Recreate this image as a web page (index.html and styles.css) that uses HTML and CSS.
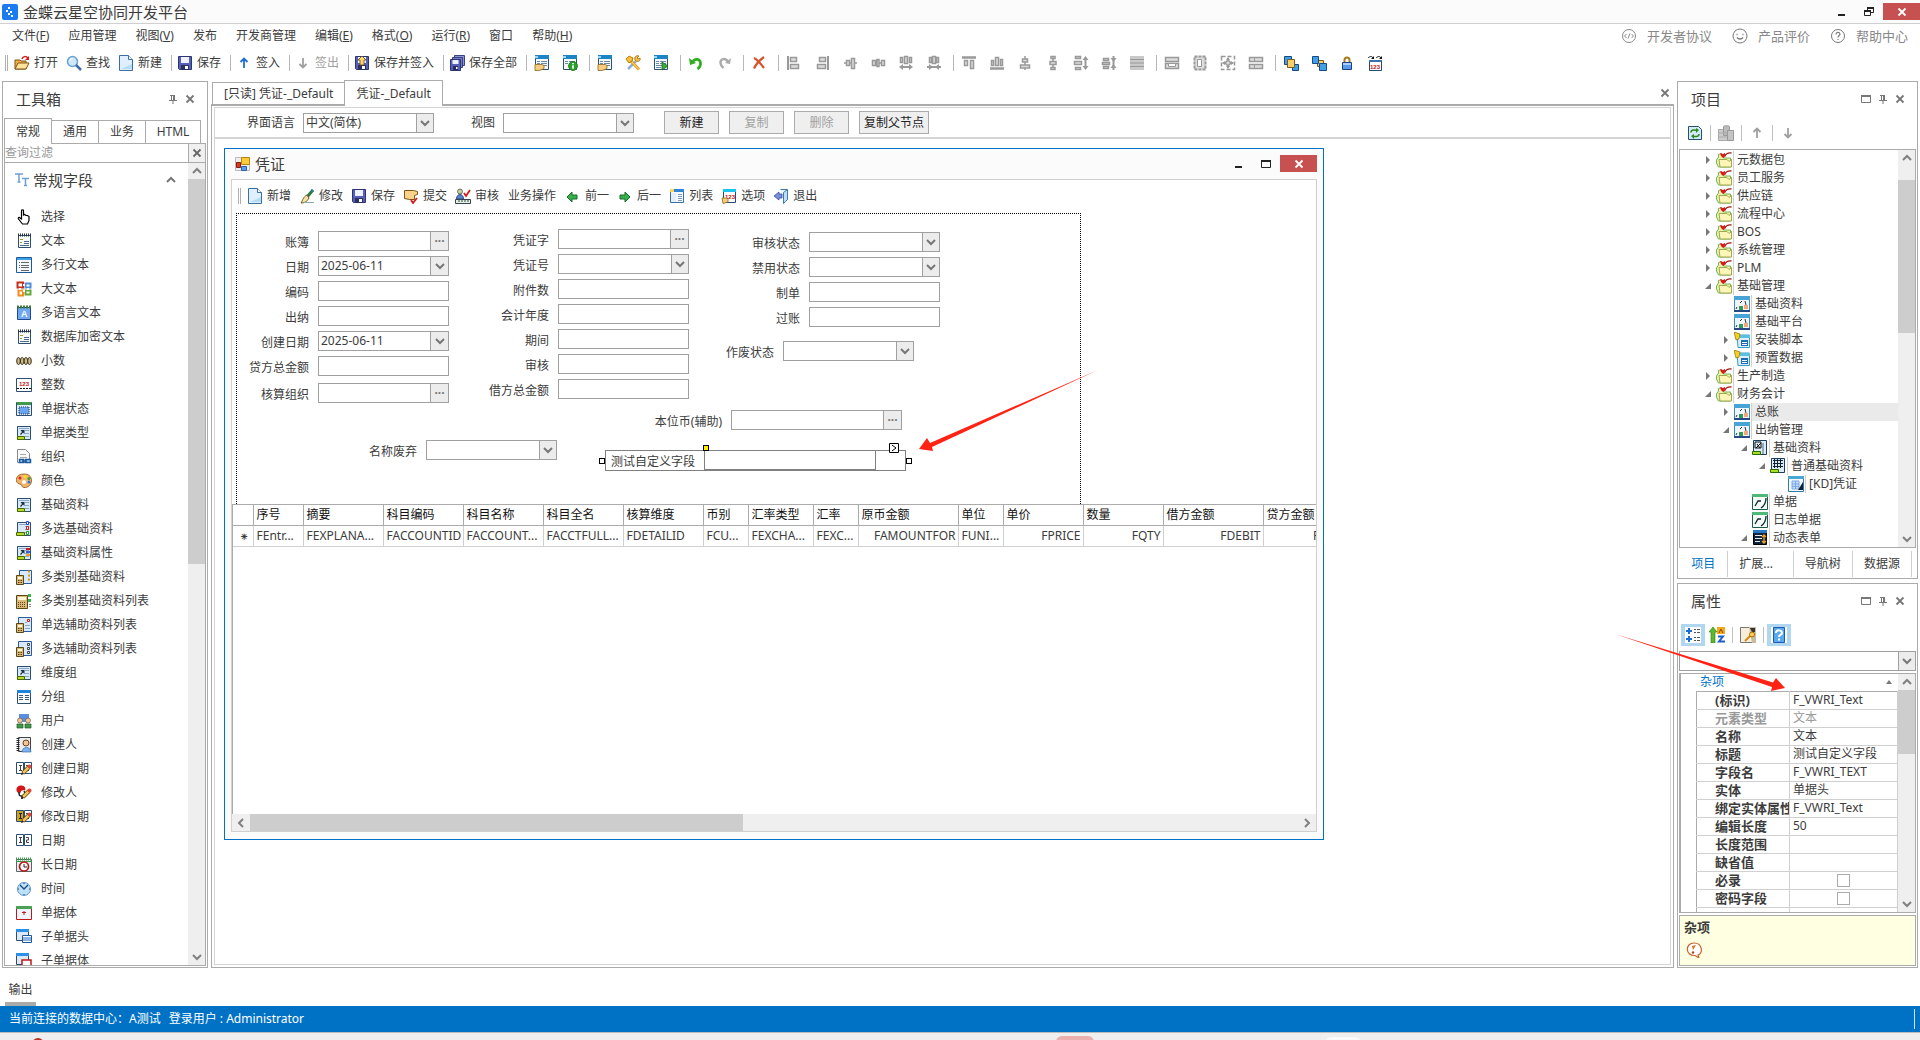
FILE: index.html
```html
<!DOCTYPE html>
<html lang="zh-CN">
<head>
    <meta charset="UTF-8">
    <meta name="viewport" content="width=device-width, initial-scale=1.0">
    <title>金蝶云星空协同开发平台</title>
    <link rel="stylesheet" href="styles.css">
</head>
<body>
    <!-- icon sprite -->
    <svg class="sprite" aria-hidden="true">
        <symbol id="i-logo" viewBox="0 0 16 16"><rect width="16" height="16" rx="2" fill="#1b7bf0"/><path d="M6 3h2v2H6zM4 6h2v2H4zM8 7h2v2H8zM6 9h2v2H6zM9 11h2v2H9z" fill="#fff"/></symbol>
        <symbol id="i-close" viewBox="0 0 16 16"><path d="M4.500 4.500l7 7M11.500 4.500l-7 7" stroke="currentColor" stroke-width="1.800" fill="none"/></symbol>
        <symbol id="i-min" viewBox="0 0 16 16"><path d="M5 10h7v2H5z" fill="currentColor"/></symbol>
        <symbol id="i-max" viewBox="0 0 16 16"><path d="M3.500 4.500h9v7h-9z" stroke="currentColor" fill="none"/><path d="M3 4h10v2H3z" fill="currentColor"/></symbol>
        <symbol id="i-restore" viewBox="0 0 16 16"><path d="M6.500 6V3.500h6v5H10M3.500 7.500h6v4h-6z" stroke="currentColor" fill="none"/><path d="M6 3h7v2H6zM3 6h7v2H3z" fill="currentColor"/></symbol>
        <symbol id="i-pin" viewBox="0 0 16 16"><path d="M6.500 4v5M5 4.500h5M4 9.500h8M8 9v4" stroke="currentColor" fill="none"/><path d="M8 4h2v6H8z" fill="currentColor"/></symbol>
        <symbol id="i-chev-up" viewBox="0 0 16 16"><path d="M4 10l4-4 4 4" stroke="currentColor" stroke-width="2" fill="none"/></symbol>
        <symbol id="i-chev-down" viewBox="0 0 16 16"><path d="M4 6l4 4 4-4" stroke="currentColor" stroke-width="2" fill="none"/></symbol>
        <symbol id="i-chev-left" viewBox="0 0 16 16"><path d="M10 4L6 8l4 4" stroke="currentColor" stroke-width="2" fill="none"/></symbol>
        <symbol id="i-chev-right" viewBox="0 0 16 16"><path d="M6 4l4 4-4 4" stroke="currentColor" stroke-width="2" fill="none"/></symbol>
        <symbol id="i-code" viewBox="0 0 16 16"><circle cx="8" cy="8" r="6.500" fill="none" stroke="#888"/><path d="M5.500 6l-2 2 2 2M10.500 6l2 2-2 2M9 5.500l-2 5" fill="none" stroke="#888"/></symbol>
        <symbol id="i-smile" viewBox="0 0 16 16"><circle cx="8" cy="8" r="7" fill="none" stroke="#777"/><path d="M4.500 6.500h1M10.500 6.500h1M5 9.500c1.500 2 4.500 2 6 0" fill="none" stroke="#777" stroke-width="1.300"/></symbol>
        <symbol id="i-help" viewBox="0 0 16 16"><circle cx="8" cy="8" r="6.500" fill="none" stroke="#777"/><path d="M6 6.500c0-3 4-2.500 4-.3C10 7.500 8 7.500 8 9.500M8 11v1" fill="none" stroke="#777" stroke-width="1.200"/></symbol>

        <symbol id="i-open" viewBox="0 0 16 16"><path d="M1 5h5l1 1h5v8H1z" fill="#f0b04a" stroke="#7c5416"/><path d="M1 14l3-6h11l-3 6z" fill="#ffe39a" stroke="#7c5416"/><path d="M8 4c1-3 4-3 6-1" stroke="#d61c1c" stroke-width="1.500" fill="none"/><path d="M15 1v4h-4z" fill="#d61c1c"/></symbol>
        <symbol id="i-search" viewBox="0 0 16 16"><circle cx="6.500" cy="6.500" r="5" fill="#cfe8fb" stroke="#6aa2d6" stroke-width="1.500"/><path d="M10 10l5 5" stroke="#3e6ea8" stroke-width="2.500"/><path d="M4 6c0-1.500 1-2.500 2.500-2.500" stroke="#fff" fill="none"/></symbol>
        <symbol id="i-new" viewBox="0 0 16 16"><path d="M1.500.5h9l4 4v11h-13z" fill="#dff0fc" stroke="#3a6ea5"/><path d="M10.500.5v4h4" fill="#fff" stroke="#3a6ea5"/><path d="M3 14h11V9z" fill="#b4dbf7"/></symbol>
        <symbol id="i-save" viewBox="0 0 16 16"><path d="M1.500 1.500h13v13h-12l-1-1z" fill="#5561b8" stroke="#2d3570"/><path d="M4 2h8v6H4z" fill="#eef2ff"/><path d="M4 10h8v5H4z" fill="#2b3060"/><path d="M8 11h3v3H8z" fill="#fff"/></symbol>
        <symbol id="i-up" viewBox="0 0 16 16"><path d="M8 13V4M4.500 7L8 3.500 11.500 7" stroke="currentColor" stroke-width="1.800" fill="none"/></symbol>
        <symbol id="i-down" viewBox="0 0 16 16"><path d="M8 3v9M4.500 9L8 12.500 11.500 9" stroke="currentColor" stroke-width="1.800" fill="none"/></symbol>
        <symbol id="i-saveup" viewBox="0 0 16 16"><use href="#i-save"/><path d="M8 1l4 4h-2v5H6V5H4z" fill="#ffd76b" stroke="#6b4a12" stroke-width=".8"/></symbol>
        <symbol id="i-saveall" viewBox="0 0 16 16"><path d="M5.500.5h10v10h-10z" fill="#8b95d8" stroke="#39427f"/><path d="M3.500 2.500h10v10h-10z" fill="#7480cc" stroke="#39427f"/><path d="M1.500 4.500h10v11h-10z" fill="#5561b8" stroke="#2d3570"/><path d="M3.500 5h6v4h-6z" fill="#eef2ff"/><path d="M4 11h5v4H4z" fill="#252b58"/><path d="M7 12h1.500v2H7z" fill="#fff"/></symbol>
        <symbol id="i-form" viewBox="0 0 16 16"><path d="M1.500.5h13v14h-13z" fill="#f4f8fc" stroke="#2c4f70"/><path d="M1 0h14v4H1z" fill="#1d84c5"/><path d="M1 1h3v2H1z" fill="#9fd4f4"/><path d="M3 6.500h3M7 6.500h6M7 8.500h6M3 8.500h3M7 10.500h6" stroke="#6d8aa3"/></symbol>
        <symbol id="i-formhand" viewBox="0 0 16 16"><use href="#i-form"/><path d="M1 9.500h7l2 1v3l-2 1-3 1H1z" fill="#f6ce7e" stroke="#8a6420" stroke-width=".8"/></symbol>
        <symbol id="i-forminfo" viewBox="0 0 16 16"><use href="#i-form"/><circle cx="11" cy="11" r="4.500" fill="#2ca02c" stroke="#166b16" stroke-width=".7"/><path d="M11 8v1.300M11 10.300v3.500" stroke="#fff" stroke-width="1.600"/></symbol>
        <symbol id="i-tools" viewBox="0 0 16 16"><path d="M3 14l8-8" stroke="#8fb0da" stroke-width="2.500"/><path d="M6 6l8 8.500" stroke="#d88a10" stroke-width="2.800"/><path d="M6 6l8 8.500" stroke="#ffd060" stroke-width="1.200"/><path d="M1 4l3-3 4 2-1 3-3 2z" fill="#ffbf2e" stroke="#9a6a00" stroke-width=".8"/><path d="M10 5c-1-3 1-5 4-4l-2 2 1 1 2-1c1 3-2 4-4 3z" fill="#f3c34c" stroke="#9a6a00" stroke-width=".8"/></symbol>
        <symbol id="i-formgo" viewBox="0 0 16 16"><use href="#i-form"/><path d="M3 10.500h5M3 12.500h5" stroke="#6d8aa3"/><path d="M9 7l6 4-6 4z" fill="#3cab3c" stroke="#176b17" stroke-width=".8"/></symbol>
        <symbol id="i-undo" viewBox="0 0 16 16"><path d="M4 8c2-5 9-5 8.500 1-.2 2.500-1.500 4-3 5" stroke="#2fae22" stroke-width="2.800" fill="none"/><path d="M1 3l1 7 6-2z" fill="#2fae22"/></symbol>
        <symbol id="i-redo" viewBox="0 0 16 16"><path d="M12 7c-2-4-8-4-7.500 1 .2 2.500 1.500 4 3 5" stroke="#aaa" stroke-width="2.500" fill="none"/><path d="M15 3l-1 6-5-1z" fill="#aaa"/></symbol>
        <symbol id="i-del" viewBox="0 0 16 16"><path d="M3 3c4 2 7 6 10 10M13 2C9 5 5 9 3 13.500" stroke="#d9532c" stroke-width="2.200" fill="none"/></symbol>

        <symbol id="i-al" viewBox="0 0 16 16"><path d="M2 1v14" stroke="#999" stroke-width="2"/><path d="M4.500 2.500h6v4h-6zM4.500 9.500h8v4h-8z" fill="#ddd" stroke="#999" stroke-width="1.500"/></symbol>
        <symbol id="i-ar" viewBox="0 0 16 16"><path d="M14 1v14" stroke="#999" stroke-width="2"/><path d="M5.500 2.500h6v4h-6zM3.500 9.500h8v4h-8z" fill="#ddd" stroke="#999" stroke-width="1.500"/></symbol>
        <symbol id="i-ac" viewBox="0 0 16 16"><path d="M2 8h13" stroke="#999" stroke-width="1.500"/><path d="M4.500 5.500h3v5h-3zM9.500 3.500h3v10h-3z" fill="#ddd" stroke="#999" stroke-width="1.500"/></symbol>
        <symbol id="i-am" viewBox="0 0 16 16"><path d="M2 8h12" stroke="#999" stroke-width="1.500"/><path d="M2.500 5.500h3v5h-3zM7 4.500h2v7H7zM11.500 5.500h3v5h-3z" fill="#ddd" stroke="#999" stroke-width="1.500"/></symbol>
        <symbol id="i-hs" viewBox="0 0 16 16"><path d="M2.500 2.500h2v5h-2zM6.500 1.500h3v7h-3zM11.500 2.500h2v5h-2z" fill="#ddd" stroke="#999" stroke-width="1.500"/><path d="M3 12h10" stroke="#999" stroke-width="2"/><path d="M5 9v6l-4-3zM11 9v6l4-3z" fill="#999"/></symbol>
        <symbol id="i-hd" viewBox="0 0 16 16"><path d="M3.500 2.500h2v5h-2zM6.500 1.500h3v7h-3zM10.500 2.500h2v5h-2z" fill="#ddd" stroke="#999" stroke-width="1.500"/><path d="M1 12h14" stroke="#999" stroke-width="2"/><path d="M3 9v6l4-3zM13 9v6l-4-3z" fill="#999"/></symbol>
        <symbol id="i-at" viewBox="0 0 16 16"><path d="M1 2.500h14" stroke="#999" stroke-width="2.500"/><path d="M3.500 5.500h3v5h-3zM9.500 5.500h3v8h-3z" fill="#ddd" stroke="#999" stroke-width="1.500"/></symbol>
        <symbol id="i-ab" viewBox="0 0 16 16"><path d="M1 13.500h14" stroke="#999" stroke-width="2.500"/><path d="M2.500 5.500h2v5h-2zM6.500 2.500h3v8h-3zM11.500 4.500h2v6h-2z" fill="#ddd" stroke="#999" stroke-width="1.500"/></symbol>
        <symbol id="i-vc" viewBox="0 0 16 16"><path d="M8 1v14" stroke="#999" stroke-width="1.500"/><path d="M5.500 4h5v3h-5zM3.500 10h9v3h-9z" fill="#ddd" stroke="#999" stroke-width="1.500"/></symbol>
        <symbol id="i-vm" viewBox="0 0 16 16"><path d="M8 1v14" stroke="#999" stroke-width="1.500"/><path d="M6 1.500h4v2H6zM5 6.500h6v3H5zM6 12.500h4v2H6z" fill="#ddd" stroke="#999" stroke-width="1.500"/></symbol>
        <symbol id="i-vs" viewBox="0 0 16 16"><path d="M2.500 1.500h5v2h-5zM1.500 6.500h7v3h-7zM2.500 12.500h5v2h-5z" fill="#ddd" stroke="#999" stroke-width="1.500"/><path d="M12.500 3v10" stroke="#999" stroke-width="2"/><path d="M9.500 5h6l-3-4zM9.500 11h6l-3 4z" fill="#999"/></symbol>
        <symbol id="i-vd" viewBox="0 0 16 16"><path d="M2.500 3.500h5v2h-5zM1.500 7.500h7v2h-7zM2.500 11.500h5v2h-5z" fill="#ddd" stroke="#999" stroke-width="1.500"/><path d="M12.500 1v14" stroke="#999" stroke-width="2"/><path d="M9.500 3h6l-3 4zM9.500 13h6l-3-4z" fill="#999"/></symbol>
        <symbol id="i-rows" viewBox="0 0 16 16"><path d="M1 1h14v14H1z" fill="#c9c9c9"/><path d="M1 4.500h14M1 8h14M1 11.500h14" stroke="#999"/></symbol>
        <symbol id="i-sw" viewBox="0 0 16 16"><path d="M1.500 2.500h13v4h-13zM1.500 8.500h13v5h-13z" fill="#ddd" stroke="#999" stroke-width="1.500"/><path d="M4.500 8.500h7v3h-7z" fill="#fff" stroke="#999"/></symbol>
        <symbol id="i-sh" viewBox="0 0 16 16"><path d="M2.500 1.500h11v13h-11z" fill="#ddd" stroke="#999" stroke-width="2" stroke-dasharray="3 1"/><path d="M5.500 4.500h4v7h-4z" fill="#fff" stroke="#999"/></symbol>
        <symbol id="i-sb" viewBox="0 0 16 16"><path d="M1.500 1.500h13v13h-13z" fill="none" stroke="#999" stroke-width="1.500" stroke-dasharray="4 2"/><path d="M8 3v10M3 8h10" stroke="#999" stroke-width="1.500"/><path d="M8 2l2 3H6zM8 14l2-3H6zM2 8l3-2v4zM14 8l-3-2v4z" fill="#999"/><path d="M6 6h4v4H6z" fill="#ddd" stroke="#888"/></symbol>
        <symbol id="i-sg" viewBox="0 0 16 16"><path d="M1.500 2.500h13v4h-13zM1.500 9.500h13v4h-13z" fill="#ddd" stroke="#999" stroke-width="1.500"/><path d="M6.500 2v5M6.500 9v5" stroke="#999"/></symbol>
        <symbol id="i-front" viewBox="0 0 16 16"><path d="M1.500 1.500h7v8h-7zM9.500 9.500h6v6h-6z" fill="#3f9fe8" stroke="#164a86"/><path d="M4.500 4.500h7v8h-7z" fill="#ffcf6b" stroke="#7d5a1a"/></symbol>
        <symbol id="i-back" viewBox="0 0 16 16"><path d="M6.500 5.500h6v6h-6z" fill="#ffcf6b" stroke="#7d5a1a"/><path d="M1.500 1.500h6v7h-6zM8.500 8.500h7v7h-7z" fill="#3f9fe8" stroke="#164a86"/></symbol>
        <symbol id="i-lock" viewBox="0 0 16 16"><path d="M5.500 8V5c0-3.500 5-3.500 5 0v3" stroke="#a87b20" stroke-width="2" fill="none"/><path d="M3.500 7.500h9v7h-9z" fill="#5a9be8" stroke="#1d3f86"/><path d="M4 8h8v2H4z" fill="#a8d0fa"/></symbol>
        <symbol id="i-num" viewBox="0 0 16 16"><path d="M2.500 5.500h12v10h-12z" fill="#fff" stroke="#234a7c"/><path d="M2 5h13v2H2z" fill="#3b6fa8"/><path d="M1 3c2-2 4-2 5 0M9 3c2-2 4-2 5 0" stroke="#111" fill="none"/><path d="M7 1v3H4zM15 1v3h-3z" fill="#111"/><text x="3" y="14" class="tiny">123</text></symbol>

        <symbol id="i-app-form" viewBox="0 0 16 16"><path d="M.5 1.500h14v13h-14z" fill="#eee" stroke="#bbb"/><path d="M6.500 1.500h8v7h-8z" fill="#ffca3a" stroke="#b8860b"/><path d="M1.500 6.500h4v5h-4z" fill="#d63b1f" stroke="#8c1c0a"/><path d="M6.500 10.500h5v4h-5z" fill="#5c9df0" stroke="#2c5fae"/></symbol>
        <symbol id="i-brush" viewBox="0 0 16 16"><path d="M14 2L8 9" stroke="#2b7a3b" stroke-width="3"/><path d="M13 3l1-1" stroke="#2b7fd0" stroke-width="3"/><path d="M8 7l2 3c-2 4-5 5-8 5 2-3 2-6 6-8z" fill="#f2e3a6" stroke="#6e5a22"/><path d="M5 14.500h10" stroke="#8aa"/></symbol>
        <symbol id="i-submit" viewBox="0 0 16 16"><path d="M1.500 2.500h9l4 1v3l-3 1v4h-5l-5-1z" fill="#fbd28a" stroke="#7a5418"/><path d="M8 12l2 3 4-5" stroke="#d21b1b" stroke-width="1.800" fill="none"/></symbol>
        <symbol id="i-audit" viewBox="0 0 16 16"><circle cx="5" cy="3.500" r="2.500" fill="#c8d09a" stroke="#555" stroke-width=".8"/><path d="M1.500 11c0-6 7-6 7 0z" fill="#5b83c8" stroke="#2e4a85"/><path d="M9 5l2 3 4-6" stroke="#d21b1b" stroke-width="1.800" fill="none"/><path d="M.5 11.500h15v4h-15z" fill="#e7f3df" stroke="#345"/><path d="M4 12v2M7 12v2M10 12v2M13 12v2" stroke="#345"/></symbol>
        <symbol id="i-prev" viewBox="0 0 16 16"><path d="M2 9l5-5v3h5v4H7v3z" fill="#36b04a" stroke="#176b27"/></symbol>
        <symbol id="i-next" viewBox="0 0 16 16"><path d="M13 9L8 4v3H3v4h5v3z" fill="#36b04a" stroke="#176b27"/></symbol>
        <symbol id="i-list" viewBox="0 0 16 16"><path d="M1.500 1.500h13v13h-13z" fill="#f4f8ff" stroke="#3a6ea5"/><path d="M1 1h14v3H1z" fill="#2f86d8"/><path d="M1 1h4v3H1z" fill="#ffd45e"/><path d="M9 6.500h4M9 8.500h4M9 10.500h4M9 12.500h4" stroke="#7d9cc0"/><path d="M2 5h5v9H2z" fill="#e6eefa"/></symbol>
        <symbol id="i-option" viewBox="0 0 16 16"><path d="M2.500 1.500h12v13h-12z" fill="#fff" stroke="#234a7c"/><path d="M2 1h13v3H2z" fill="#18c4f0"/><text x="4" y="11" class="tiny">123</text><path d="M1 10h5l1 1v3l-5 1.500z" fill="#f6ce7e" stroke="#8a6420" stroke-width=".8"/></symbol>
        <symbol id="i-exit" viewBox="0 0 16 16"><path d="M7.500 1.500h7v10h-3" fill="#e8f4fb" stroke="#3a7ca5"/><path d="M14.500 1.500l-4 3v11l4-4z" fill="#bfe0f2" stroke="#3a7ca5"/><path d="M1 8l5-4v2h3v4H6v2z" fill="#7b8fe0" stroke="#3a4aa0" stroke-width=".8"/></symbol>

        <symbol id="i-tt" viewBox="0 0 16 16"><path d="M1 2h8M5 2v8M3.500 10h3" stroke="#6f9fd8" stroke-width="1.500"/><path d="M8 6.500h7M11.500 6.500v7M10 13.500h3" stroke="#6f9fd8" stroke-width="1.500"/></symbol>
        <symbol id="i-hand" viewBox="0 0 16 16"><path d="M5.500 10V1.500c0-1 2-1 2 0V6l1-.5 1.500.8 1.500.2 1.500 1v4l-1.500 3.500h-5L2.500 10c-.8-1.500.8-2 1.500-1z" fill="#fff" stroke="#000" stroke-width="1.200"/></symbol>
        <symbol id="i-note" viewBox="0 0 16 16"><path d="M2.500 2.500h12v12h-12z" fill="#f6fafd" stroke="#2c4f70"/><path d="M2 2h13" stroke="#234" stroke-width="3" stroke-dasharray="1 1"/><path d="M4 6.500h3M4 9.500h2" stroke="#b39a1c"/><path d="M8 8.500h5M8 10.500h5M4 12.500h9" stroke="#4a6a88"/></symbol>
        <symbol id="i-lines" viewBox="0 0 16 16"><path d="M.5.5h15v15H.5z" fill="#f4f8fc" stroke="#1c5a9c"/><path d="M1 1h14v2H1z" fill="#3da0e8"/><path d="M3 5.500h1M5 5.500h8M3 8.500h1M5 8.500h8M3 10.500h1M5 10.500h8M5 13.500h8" stroke="#666"/></symbol>
        <symbol id="i-office" viewBox="0 0 16 16"><path d="M7 6.500H1.500v-5H7z" fill="none" stroke="#c4301c" stroke-width="2"/><path d="M14.500 6.500H9.500v-4h5z" fill="none" stroke="#4b8fd8" stroke-width="2"/><path d="M7 14.500H2.500v-5H7z" fill="none" stroke="#f28a1c" stroke-width="2"/><path d="M14.500 13.500H9.500v-4h5z" fill="none" stroke="#67a83a" stroke-width="2"/><path d="M7 4h2M8 9v2M4 7v2M12 7v2" stroke="#fff" stroke-width="2"/></symbol>
        <symbol id="i-notea" viewBox="0 0 16 16"><path d="M1.500 2.500h13v12h-13z" fill="#6fa8f0" stroke="#1f4a8c"/><path d="M1 2h14" stroke="#3c7a3c" stroke-width="3" stroke-dasharray="2 1"/><text x="5" y="12" class="glyph">A</text></symbol>
        <symbol id="i-beads" viewBox="0 0 16 16"><path d="M1 8h14" stroke="#333"/><g fill="#cdbb88" stroke="#3a3220"><ellipse cx="2.500" cy="8" rx="1.800" ry="3.500"/><ellipse cx="6.200" cy="8" rx="1.800" ry="3.500"/><ellipse cx="9.900" cy="8" rx="1.800" ry="3.500"/><ellipse cx="13.500" cy="8" rx="1.800" ry="3.500"/></g></symbol>
        <symbol id="i-int" viewBox="0 0 16 16"><path d="M.5 1.500h15v13H.5z" fill="#fff" stroke="#2c4f70"/><text x="3" y="9" class="tiny">123</text><path d="M1 11.500h14" stroke="#111" stroke-dasharray="2 1"/></symbol>
        <symbol id="i-state" viewBox="0 0 16 16"><path d="M.5 1.500h15v13H.5z" fill="#dfeafa" stroke="#2c4f70"/><path d="M1 1h14v3H1z" fill="#3f9a4a"/><path d="M3 6h10v7H3z" fill="#6aa5f2" stroke="#234" stroke-dasharray="1 1"/></symbol>
        <symbol id="i-sheet" viewBox="0 0 16 16"><path d="M1.500 1.500h13v13h-13z" fill="#d8eafa" stroke="#2c4f70"/><path d="M9 5.500h4M9 8.500h4M9 11.500h4M3 3.500h10" stroke="#8aa8c4"/></symbol>
        <symbol id="i-base" viewBox="0 0 16 16"><use href="#i-sheet"/><path d="M4.500 5h4v4l-1.500-1.500L5 10l-1-1 2-2z" fill="#1d3038"/><path d="M1.500 11.500h7v3h-7z" fill="#b4dc28" stroke="#4a6a00"/></symbol>
        <symbol id="i-chain" viewBox="0 0 16 16"><path d="M1.500.5h8l4 4v9h-12z" fill="#fafafa" stroke="#888"/><path d="M4 5.500h6M4 8.500h7" stroke="#aaa"/><path d="M3.500 10.500h4v3h-4zM9.500 10.500h5v3h-5z" fill="#a9d0f2" stroke="#1f5a9c" stroke-width="1.500"/><path d="M6 12h5" stroke="#1f5a9c" stroke-width="1.500"/></symbol>
        <symbol id="i-palette" viewBox="0 0 16 16"><path d="M8 1C-2 1-1 11 4 11c2 0 1 3 4 3.500 4 .5 8-3 7.500-8C15 3 12 1 8 1z" fill="#f0b56a" stroke="#a8682a"/><circle cx="4" cy="5" r="1.500" fill="#e02020"/><circle cx="9" cy="3.500" r="1.500" fill="#f5e020"/><circle cx="13" cy="5.500" r="1.500" fill="#30a030"/><circle cx="13" cy="9" r="1.500" fill="#3070e0"/><circle cx="8" cy="9" r="2" fill="#fff"/></symbol>
        <symbol id="i-multi" viewBox="0 0 16 16"><use href="#i-sheet"/><path d="M10.500.5h2v3h-2z" fill="#fff" stroke="#2040e0"/><path d="M10.500 5.500h2v3h-2z" fill="#fff" stroke="#d01818"/><path d="M10.500 10.500h2v3h-2z" fill="#fff" stroke="#18a018"/><path d="M.5 11.500h8v3h-8z" fill="#b4dc28" stroke="#4a6a00"/></symbol>
        <symbol id="i-prop" viewBox="0 0 16 16"><use href="#i-base"/><path d="M10 3h4v2h-4z" fill="#d01818"/><path d="M10 6h4v2h-4z" fill="#3060e0"/><path d="M10 9h4v2h-4z" fill="#f0a020"/></symbol>
        <symbol id="i-calc" viewBox="0 0 16 16"><path d="M.5 6.500h7v9h-7z" fill="#d9b978" stroke="#5e4516"/><path d="M2 8h4v2H2z" fill="#fff6d8"/><path d="M2 11.500h4M2 13.500h4" stroke="#5e4516" stroke-dasharray="1 .5"/></symbol>
        <symbol id="i-calc1" viewBox="0 0 16 16"><path d="M3.500 1.500h12v13h-12z" fill="#d8eafa" stroke="#2c5a9c"/><path d="M12 2.500h2M12 6.500h2M12 10.500h2" stroke="#e09a10" stroke-width="2"/><use href="#i-calc"/></symbol>
        <symbol id="i-calc2" viewBox="0 0 16 16"><path d="M.5 2.500h11v13H.5z" fill="#d9b978" stroke="#5e4516"/><path d="M2 4h8v3H2z" fill="#fff6d8"/><path d="M2 9.500h8M2 11.500h8M2 13.500h8" stroke="#5e4516" stroke-dasharray="1 1"/><path d="M12 1h3v3h-3zM12 6h3v3h-3z" fill="#3bb54a"/><path d="M14 11v3" stroke="#111" stroke-dasharray="1 1"/></symbol>
        <symbol id="i-calc3" viewBox="0 0 16 16"><path d="M2.500.5h13v14h-13z" fill="#d8eafa" stroke="#2c5a9c"/><path d="M9 5.500h2M9 8.500h5M9 11.500h5" stroke="#8aa8c4"/><path d="M11.500 2.500h2v2h-2z" fill="#fff" stroke="#d01818"/><use href="#i-calc"/></symbol>
        <symbol id="i-calc4" viewBox="0 0 16 16"><path d="M2.500.5h13v14h-13z" fill="#d8eafa" stroke="#2c5a9c"/><path d="M11.500 2.500h2v2h-2zM11.500 6.500h2v2h-2zM11.500 10.500h2v2h-2z" fill="#fff" stroke="#444"/><use href="#i-calc"/></symbol>
        <symbol id="i-group" viewBox="0 0 16 16"><path d="M1.500 1.500h13v13h-13z" fill="#f8fbff" stroke="#2c4f70"/><path d="M1 1h14v3H1z" fill="#1e84dc"/><path d="M3 6.500h4M3 8.500h4M3 10.500h4M9 6.500h4M9 8.500h4M9 10.500h4" stroke="#3a5a78"/></symbol>
        <symbol id="i-users" viewBox="0 0 16 16"><path d="M3 1h10v8H3z" fill="#5a8ee0"/><circle cx="4" cy="7.500" r="2.500" fill="#f2c796" stroke="#5a4a3a" stroke-width=".6"/><circle cx="12" cy="7.500" r="2.500" fill="#f2c796" stroke="#5a4a3a" stroke-width=".6"/><path d="M1 15v-4h6v4zM9 15v-4h6v4z" fill="#3f9a4a" stroke="#1c5a28" stroke-width=".7"/></symbol>
        <symbol id="i-creator" viewBox="0 0 16 16"><path d="M2.500.5h12v14h-12z" fill="#e8eef4" stroke="#444"/><path d="M2 1v14" stroke="#222" stroke-width="3" stroke-dasharray="1 1"/><circle cx="10" cy="6" r="3" fill="#f2c796" stroke="#7a3a10"/><path d="M6 15c0-6 9-6 9 0z" fill="#7fb2ee" stroke="#3a6ab0" stroke-width=".7"/></symbol>
        <symbol id="i-date" viewBox="0 0 16 16"><path d="M.5 1.500h7v11h-7zM8.500 1.500h7v11h-7z" fill="#fff" stroke="#2c4f70"/><path d="M3 4.500h3M3 9.500h3M4.500 4v6" stroke="#444"/><path d="M10 4.500h2.500v2.500H10.500v2.500H13" stroke="#444" fill="none"/></symbol>
        <symbol id="i-pencil" viewBox="0 0 16 16"><path d="M13 6l-6 6" stroke="#5e4010" stroke-width="4"/><path d="M13 6l-6 6" stroke="#f4c45c" stroke-width="2.500"/><circle cx="13.500" cy="5.500" r="2" fill="#e0482c"/><path d="M5 14l1-3 2 2z" fill="#222"/></symbol>
        <symbol id="i-cdate" viewBox="0 0 16 16"><use href="#i-date"/><use href="#i-pencil"/></symbol>
        <symbol id="i-modifier" viewBox="0 0 16 16"><path d="M1 7C-1 2 3 0 6 .5c3 .5 4 3 3 5-3-1-4 0-5 3z" fill="#d01818"/><path d="M3 7c0 3 0 4 3 4v3M8 6l1 2" stroke="#222" stroke-width="1.500" fill="none"/><use href="#i-pencil"/></symbol>
        <symbol id="i-mdate" viewBox="0 0 16 16"><use href="#i-date"/><path d="M1 2h6v10H1z" fill="#d0a020"/><path d="M3 4.500h3M3 9.500h3M4.500 4v6" stroke="#222"/><use href="#i-pencil"/></symbol>
        <symbol id="i-ldate" viewBox="0 0 16 16"><path d="M.5 2.500h15v12H.5z" fill="#e6edf4" stroke="#566"/><path d="M0 2h16" stroke="#3f9a4a" stroke-width="3" stroke-dasharray="1 1"/><path d="M0 4.500h16" stroke="#3f9a4a"/><circle cx="8" cy="9.500" r="4.500" fill="#fff" stroke="#c01818" stroke-width="1.700"/><path d="M8 7v3h3" stroke="#222" fill="none"/></symbol>
        <symbol id="i-clock" viewBox="0 0 16 16"><circle cx="8" cy="8" r="6.500" fill="#bfe0fa" stroke="#5a94cc"/><path d="M4 4l4 4 4-4" stroke="#1d4a7c" stroke-width="1.300" fill="none"/><path d="M8 2v1M8 13v1M2 8h1M13 8h1" stroke="#1d4a7c"/></symbol>
        <symbol id="i-entity" viewBox="0 0 16 16"><path d="M.5 1.500h15v13H.5z" fill="#eef4fc" stroke="#c01818"/><path d="M0 1h16v3H0z" fill="#4aa354"/><path d="M6 7.500h4M8 6v4" stroke="#c01818"/></symbol>
        <symbol id="i-subhead" viewBox="0 0 16 16"><path d="M.5.5h12v11H.5z" fill="#dce8f6" stroke="#2c4f70"/><path d="M0 0h13v3H0z" fill="#2a90e8"/><path d="M6.500 6.500h9v7h-9z" fill="#fff" stroke="#1c5aa0"/><path d="M7 9h8M7 11h8" stroke="#1c6ac0"/></symbol>
        <symbol id="i-subbody" viewBox="0 0 16 16"><path d="M.5.5h12v11H.5z" fill="#dce8f6" stroke="#2c4f70"/><path d="M0 0h13v3H0z" fill="#2a90e8"/><path d="M6 7h9v7H6z" fill="#fff" stroke="#c01818" stroke-width="1.500"/></symbol>

        <symbol id="i-refresh" viewBox="0 0 16 16"><path d="M1.500 1.500h10l3 3v10h-13z" fill="#d4eafa" stroke="#26506e"/><path d="M4 7.500c0-3 4-3 6-2M12 9c0 3-4 3-6 2" stroke="#2a8a1c" stroke-width="1.500" fill="none"/><path d="M9 3v5l3-3zM7 9v5l-3-3z" fill="#2a8a1c"/></symbol>
        <symbol id="i-pkg" viewBox="0 0 16 16"><path d="M.5 4.500h9v11h-9z" fill="#ccc" stroke="#aaa"/><path d="M5.500 1.500c0-1 6-1 6 0v9h-6z" fill="#bbb" stroke="#999"/><path d="M9.500 5.500h6v10h-6z" fill="#c4c4c4" stroke="#999"/><path d="M1 8h8M1 12h8" stroke="#aaa"/></symbol>
        <symbol id="i-folder" viewBox="0 0 16 16"><path d="M.5 8l2-3V2.500l3-1 2 2V6h7v9h-12L.5 11z" fill="#eef0b0" stroke="#6fb84c"/><path d="M3 7.500h8l2 2 2.500-2V15H4z" fill="#fdf6b8" stroke="#a0a850"/><path d="M9 4c1-2.500 3-3.500 6.500-3" stroke="#a81818" stroke-width="1.300" fill="none"/><path d="M4 1l3 1 2-1v3h1L7 6 5 4z" fill="#e01818"/></symbol>
        <symbol id="i-app" viewBox="0 0 16 16"><path d="M.5.500h15v15H.5z" fill="#eef5fb" stroke="#3a8cbc"/><path d="M0 0h16v4H0z" fill="#48a4d4"/><path d="M2 13l1-2M6 7l2-2M11 5l1 4" stroke="#333"/><path d="M5 10h4v4H5z" fill="#2f9a5a"/><path d="M10 9h4v4h-4z" fill="#f2a878"/><path d="M0 14h16v2H0z" fill="#274a86"/></symbol>
        <symbol id="i-script" viewBox="0 0 16 16"><path d="M3 3h12.500v12.500H4z" fill="#dff0fa" stroke="#3a9ac8"/><path d="M6 3h10v3H6z" fill="#58c0e0"/><path d="M7 8h7v6H7z" fill="#1c6ab8"/><path d="M8 10.500h5M8 12.500h5" stroke="#fff"/><path d="M0 0l6 2-1 5-3 1z" fill="#f8d020" stroke="#8a6a00" stroke-width=".7"/></symbol>
        <symbol id="i-bgrid" viewBox="0 0 16 16"><path d="M1.500.5h13v14h-13z" fill="#dcecf8" stroke="#1c3c5c"/><path d="M3 2h6v6H3zM4 8l5-5M5 4l3 4" stroke="#111" fill="none"/><path d="M11 3v11" stroke="#468"/><path d="M.5 11.500h8v3h-8z" fill="#a8e020" stroke="#2a6a00"/></symbol>
        <symbol id="i-cgrid" viewBox="0 0 16 16"><path d="M1.500.5h13v14h-13z" fill="#dcecf8" stroke="#1c3c5c"/><path d="M4.500 1v9M7.500 1v9M10.500 1v9M3 2.500h10M3 5.500h10M3 8.500h10" stroke="#123"/><path d="M.5 11.500h8v3h-8z" fill="#a8e020" stroke="#2a6a00"/></symbol>
        <symbol id="i-kd" viewBox="0 0 16 16"><path d="M.5.500h15v15H.5z" fill="#f4faff" stroke="#2c7cac"/><path d="M0 0h16v3H0z" fill="#48a8d0"/><path d="M4 5h7v8H4z" fill="#c4dcfa" stroke="#7aa8e0"/><path d="M7.500 5v8M4 8h7M4 10.500h7" stroke="#7aa8e0"/><path d="M15 6l-5 8h5z" fill="#123"/></symbol>
        <symbol id="i-bill" viewBox="0 0 16 16"><path d="M.5.500h15v15H.5z" fill="#f4fcf6" stroke="#1c5c4c"/><path d="M0 0h16v3H0z" fill="#4fb878"/><path d="M3 12l3-5h3M14 4c0 5-2 8-5 10" stroke="#123" stroke-width="1.300" fill="none"/></symbol>
        <symbol id="i-dyn" viewBox="0 0 16 16"><path d="M1.500.500h13v14h-13z" fill="#10243c" stroke="#000"/><path d="M1 0h14v3H1z" fill="#2878c8"/><path d="M3 5.500h7M3 8.500h7M3 11.500h5" stroke="#e8e8e8"/><path d="M12 5v8M10 7l2-2 2 2M10 11l2 2 2-2" stroke="#f0a020" stroke-width="1.300" fill="none"/></symbol>

        <symbol id="i-cat" viewBox="0 0 16 16"><path d="M0 0h16v16H0z" fill="#fff"/><path d="M1 4h6M4 1v6M1 12h6M4 9v6" stroke="#1e6ed0" stroke-width="2"/><path d="M9 2.500h2M12 2.500h3M9 5.500h2M12 5.500h3M9 10.500h2M12 10.500h3M9 13.500h2M12 13.500h3" stroke="#555"/></symbol>
        <symbol id="i-az" viewBox="0 0 16 16"><path d="M4 0l4 5H6v11H2V5H0z" fill="#5cb82c" stroke="#2c7a10" stroke-width=".6"/><path d="M8 0h8v7H8z" fill="#f6a81c"/><path d="M10 6l2-4 2 4" stroke="#8a4a00" fill="none"/><path d="M9 9.500h5L10 14.500h6" stroke="#1e5ec8" stroke-width="2" fill="none"/></symbol>
        <symbol id="i-key" viewBox="0 0 16 16"><path d="M.5.500h15v15H.5z" fill="#f6eed8" stroke="#777"/><path d="M9 0h7v16h-4z" fill="#c8bda0"/><path d="M10 1h5v4h-3z" fill="#333"/><path d="M11 8l-6 6" stroke="#d08a10" stroke-width="2"/><circle cx="12" cy="7.500" r="2.500" fill="#ffd060" stroke="#a86a00"/></symbol>
        <symbol id="i-qbook" viewBox="0 0 16 16"><path d="M0 0h16v16H0z" fill="#fff"/><path d="M2.500.500h11v15h-11z" fill="#5aa8f0" stroke="#1a5ab0"/><path d="M5 6c0-4 6-3 6 0 0 2-3 1.500-3 4M8 11.500v2" stroke="#fff" stroke-width="2" fill="none"/></symbol>
        <symbol id="i-tip" viewBox="0 0 16 16"><path d="M8 1c9 0 9 11 4 12l1 3-4-2.500C-1 14-1 1 8 1z" fill="#fff" stroke="#c8622c" stroke-width="1.200"/><path d="M6 4l4-1-3 5z" fill="#d8701c"/><circle cx="7" cy="10.500" r="1.200" fill="#b84010"/></symbol>
    </svg>

    <header class="titlebar">
        <svg class="icon"><use href="#i-logo"/></svg>
        <h1>金蝶云星空协同开发平台</h1>
        <div class="window-buttons">
            <button aria-label="最小化"><svg class="icon"><use href="#i-min"/></svg></button>
            <button aria-label="还原"><svg class="icon"><use href="#i-restore"/></svg></button>
            <button class="close" aria-label="关闭"><svg class="icon"><use href="#i-close"/></svg></button>
        </div>
    </header>

    <nav class="menubar">
        <button>文件(<u>F</u>)</button>
        <button>应用管理</button>
        <button>视图(<u>V</u>)</button>
        <button>发布</button>
        <button>开发商管理</button>
        <button>编辑(<u>E</u>)</button>
        <button>格式(<u>O</u>)</button>
        <button>运行(<u>R</u>)</button>
        <button>窗口</button>
        <button>帮助(<u>H</u>)</button>
        <div class="links">
            <a href="#"><svg class="icon"><use href="#i-code"/></svg>开发者协议</a>
            <a href="#"><svg class="icon"><use href="#i-smile"/></svg>产品评价</a>
            <a href="#"><svg class="icon"><use href="#i-help"/></svg>帮助中心</a>
        </div>
    </nav>

    <div class="toolbar main-toolbar">
        <span class="grip"></span>
        <button><svg class="icon"><use href="#i-open"/></svg>打开</button>
        <button><svg class="icon"><use href="#i-search"/></svg>查找</button>
        <button><svg class="icon"><use href="#i-new"/></svg>新建</button>
        <span class="sep"></span>
        <button><svg class="icon"><use href="#i-save"/></svg>保存</button>
        <span class="sep"></span>
        <button><svg class="icon blue"><use href="#i-up"/></svg>签入</button>
        <span class="sep"></span>
        <button disabled><svg class="icon"><use href="#i-down"/></svg>签出</button>
        <span class="sep"></span>
        <button><svg class="icon"><use href="#i-saveup"/></svg>保存并签入</button>
        <span class="sep"></span>
        <button><svg class="icon"><use href="#i-saveall"/></svg>保存全部</button>
        <span class="sep"></span>
        <button class="only" aria-label="表单"><svg class="icon"><use href="#i-formhand"/></svg></button>
        <button class="only" aria-label="信息"><svg class="icon"><use href="#i-forminfo"/></svg></button>
        <span class="sep"></span>
        <button class="only" aria-label="属性"><svg class="icon"><use href="#i-formhand"/></svg></button>
        <button class="only" aria-label="工具"><svg class="icon"><use href="#i-tools"/></svg></button>
        <button class="only" aria-label="预览"><svg class="icon"><use href="#i-formgo"/></svg></button>
        <span class="sep"></span>
        <button class="only" aria-label="撤销"><svg class="icon"><use href="#i-undo"/></svg></button>
        <button class="only" aria-label="重做"><svg class="icon"><use href="#i-redo"/></svg></button>
        <span class="sep"></span>
        <button class="only" aria-label="删除"><svg class="icon"><use href="#i-del"/></svg></button>
        <span class="sep"></span>
        <button class="only" aria-label="左对齐"><svg class="icon"><use href="#i-al"/></svg></button>
        <button class="only" aria-label="右对齐"><svg class="icon"><use href="#i-ar"/></svg></button>
        <button class="only" aria-label="水平居中"><svg class="icon"><use href="#i-ac"/></svg></button>
        <button class="only" aria-label="水平等距"><svg class="icon"><use href="#i-am"/></svg></button>
        <button class="only" aria-label="增加水平间距"><svg class="icon"><use href="#i-hs"/></svg></button>
        <button class="only" aria-label="减少水平间距"><svg class="icon"><use href="#i-hd"/></svg></button>
        <span class="sep"></span>
        <button class="only" aria-label="顶端对齐"><svg class="icon"><use href="#i-at"/></svg></button>
        <button class="only" aria-label="底端对齐"><svg class="icon"><use href="#i-ab"/></svg></button>
        <button class="only" aria-label="垂直居中"><svg class="icon"><use href="#i-vc"/></svg></button>
        <button class="only" aria-label="垂直等距"><svg class="icon"><use href="#i-vm"/></svg></button>
        <button class="only" aria-label="增加垂直间距"><svg class="icon"><use href="#i-vs"/></svg></button>
        <button class="only" aria-label="减少垂直间距"><svg class="icon"><use href="#i-vd"/></svg></button>
        <button class="only" aria-label="行"><svg class="icon"><use href="#i-rows"/></svg></button>
        <span class="sep"></span>
        <button class="only" aria-label="相同宽度"><svg class="icon"><use href="#i-sw"/></svg></button>
        <button class="only" aria-label="相同高度"><svg class="icon"><use href="#i-sh"/></svg></button>
        <button class="only" aria-label="相同大小"><svg class="icon"><use href="#i-sb"/></svg></button>
        <button class="only" aria-label="网格"><svg class="icon"><use href="#i-sg"/></svg></button>
        <span class="sep"></span>
        <button class="only" aria-label="置前"><svg class="icon"><use href="#i-front"/></svg></button>
        <button class="only" aria-label="置后"><svg class="icon"><use href="#i-back"/></svg></button>
        <button class="only" aria-label="锁定"><svg class="icon"><use href="#i-lock"/></svg></button>
        <button class="only" aria-label="顺序"><svg class="icon"><use href="#i-num"/></svg></button>
    </div>

    <main class="workspace">
        <aside class="panel toolbox">
            <div class="panel-head">
                <h2>工具箱</h2>
                <button aria-label="固定"><svg class="icon"><use href="#i-pin"/></svg></button>
                <button aria-label="关闭"><svg class="icon"><use href="#i-close"/></svg></button>
            </div>
            <div class="toolbox-tabs">
                <button class="active">常规</button>
                <button>通用</button>
                <button>业务</button>
                <button class="wide">HTML</button>
            </div>
            <div class="toolbox-body">
                <div class="filter">
                    <input type="text" placeholder="查询过滤" aria-label="查询过滤">
                    <button aria-label="清除"><svg class="icon"><use href="#i-close"/></svg></button>
                </div>
                <div class="scroll-row">
                    <div class="toolbox-list">
                        <div class="section-head"><svg class="icon"><use href="#i-tt"/></svg><span>常规字段</span><svg class="icon chev"><use href="#i-chev-up"/></svg></div>
                        <ul>
                            <li><svg class="icon"><use href="#i-hand"/></svg>选择</li>
                            <li><svg class="icon"><use href="#i-note"/></svg>文本</li>
                            <li><svg class="icon"><use href="#i-lines"/></svg>多行文本</li>
                            <li><svg class="icon"><use href="#i-office"/></svg>大文本</li>
                            <li><svg class="icon"><use href="#i-notea"/></svg>多语言文本</li>
                            <li><svg class="icon"><use href="#i-note"/></svg>数据库加密文本</li>
                            <li><svg class="icon"><use href="#i-beads"/></svg>小数</li>
                            <li><svg class="icon"><use href="#i-int"/></svg>整数</li>
                            <li><svg class="icon"><use href="#i-state"/></svg>单据状态</li>
                            <li><svg class="icon"><use href="#i-base"/></svg>单据类型</li>
                            <li><svg class="icon"><use href="#i-chain"/></svg>组织</li>
                            <li><svg class="icon"><use href="#i-palette"/></svg>颜色</li>
                            <li><svg class="icon"><use href="#i-base"/></svg>基础资料</li>
                            <li><svg class="icon"><use href="#i-multi"/></svg>多选基础资料</li>
                            <li><svg class="icon"><use href="#i-prop"/></svg>基础资料属性</li>
                            <li><svg class="icon"><use href="#i-calc1"/></svg>多类别基础资料</li>
                            <li><svg class="icon"><use href="#i-calc2"/></svg>多类别基础资料列表</li>
                            <li><svg class="icon"><use href="#i-calc3"/></svg>单选辅助资料列表</li>
                            <li><svg class="icon"><use href="#i-calc4"/></svg>多选辅助资料列表</li>
                            <li><svg class="icon"><use href="#i-base"/></svg>维度组</li>
                            <li><svg class="icon"><use href="#i-group"/></svg>分组</li>
                            <li><svg class="icon"><use href="#i-users"/></svg>用户</li>
                            <li><svg class="icon"><use href="#i-creator"/></svg>创建人</li>
                            <li><svg class="icon"><use href="#i-cdate"/></svg>创建日期</li>
                            <li><svg class="icon"><use href="#i-modifier"/></svg>修改人</li>
                            <li><svg class="icon"><use href="#i-mdate"/></svg>修改日期</li>
                            <li><svg class="icon"><use href="#i-date"/></svg>日期</li>
                            <li><svg class="icon"><use href="#i-ldate"/></svg>长日期</li>
                            <li><svg class="icon"><use href="#i-clock"/></svg>时间</li>
                            <li><svg class="icon"><use href="#i-entity"/></svg>单据体</li>
                            <li><svg class="icon"><use href="#i-subhead"/></svg>子单据头</li>
                            <li><svg class="icon"><use href="#i-subbody"/></svg>子单据体</li>
                        </ul>
                    </div>
                    <div class="vscroll">
                        <svg class="icon"><use href="#i-chev-up"/></svg>
                        <div class="track"><div class="thumb" style="height: 50%"></div></div>
                        <svg class="icon"><use href="#i-chev-down"/></svg>
                    </div>
                </div>
            </div>
        </aside>

        <section class="document">
            <div class="doc-tabs">
                <button>[只读] 凭证-_Default</button>
                <button class="active">凭证-_Default</button>
                <button class="tab-close" aria-label="关闭"><svg class="icon"><use href="#i-close"/></svg></button>
            </div>
            <div class="doc-frame">
                <div class="doc-inner">
                    <div class="view-bar">
                        <label for="lang">界面语言</label>
                        <span class="combo"><select id="lang"><option>中文(简体)</option></select><svg class="icon"><use href="#i-chev-down"/></svg></span>
                        <label for="view">视图</label>
                        <span class="combo"><select id="view"><option></option></select><svg class="icon"><use href="#i-chev-down"/></svg></span>
                        <div class="view-buttons">
                            <button>新建</button>
                            <button disabled>复制</button>
                            <button disabled>删除</button>
                            <button>复制父节点</button>
                        </div>
                    </div>

                    <div class="designer">
                        <div class="form-window">
                            <div class="form-title">
                                <svg class="icon"><use href="#i-app-form"/></svg>
                                <h2>凭证</h2>
                                <div class="window-buttons">
                                    <button aria-label="最小化"><svg class="icon"><use href="#i-min"/></svg></button>
                                    <button aria-label="最大化"><svg class="icon"><use href="#i-max"/></svg></button>
                                    <button class="close" aria-label="关闭"><svg class="icon"><use href="#i-close"/></svg></button>
                                </div>
                            </div>
                            <div class="form-body">
                                <div class="toolbar form-toolbar">
                                    <span class="grip"></span>
                                    <button><svg class="icon"><use href="#i-new"/></svg>新增</button>
                                    <button><svg class="icon"><use href="#i-brush"/></svg>修改</button>
                                    <button><svg class="icon"><use href="#i-save"/></svg>保存</button>
                                    <button><svg class="icon"><use href="#i-submit"/></svg>提交</button>
                                    <button><svg class="icon"><use href="#i-audit"/></svg>审核</button>
                                    <button class="text">业务操作</button>
                                    <button><svg class="icon"><use href="#i-prev"/></svg>前一</button>
                                    <button><svg class="icon"><use href="#i-next"/></svg>后一</button>
                                    <button><svg class="icon"><use href="#i-list"/></svg>列表</button>
                                    <button><svg class="icon"><use href="#i-option"/></svg>选项</button>
                                    <button><svg class="icon"><use href="#i-exit"/></svg>退出</button>
                                </div>

                                <div class="canvas">
                                    <div class="field-columns">
                                        <div class="column first">
                                            <div class="field"><label for="book">账簿</label><span class="box"><input id="book" type="text"><button aria-label="选择账簿">···</button></span></div>
                                            <div class="field"><label for="date">日期</label><span class="box"><input id="date" type="text" value="2025-06-11"><button aria-label="选择日期"><svg class="icon"><use href="#i-chev-down"/></svg></button></span></div>
                                            <div class="field"><label for="code">编码</label><span class="box"><input id="code" type="text"></span></div>
                                            <div class="field"><label for="cashier">出纳</label><span class="box"><input id="cashier" type="text"></span></div>
                                            <div class="field"><label for="created">创建日期</label><span class="box"><input id="created" type="text" value="2025-06-11"><button aria-label="选择日期"><svg class="icon"><use href="#i-chev-down"/></svg></button></span></div>
                                            <div class="field"><label for="credit">贷方总金额</label><span class="box"><input id="credit" type="text"></span></div>
                                            <div class="field low"><label for="org">核算组织</label><span class="box"><input id="org" type="text"><button aria-label="选择组织">···</button></span></div>
                                        </div>
                                        <div class="column second">
                                            <div class="field"><label for="word">凭证字</label><span class="box"><input id="word" type="text"><button aria-label="选择凭证字">···</button></span></div>
                                            <div class="field"><label for="number">凭证号</label><span class="combo"><select id="number"><option></option></select><svg class="icon"><use href="#i-chev-down"/></svg></span></div>
                                            <div class="field"><label for="attach">附件数</label><span class="box"><input id="attach" type="text"></span></div>
                                            <div class="field"><label for="year">会计年度</label><span class="box"><input id="year" type="text"></span></div>
                                            <div class="field"><label for="period">期间</label><span class="box"><input id="period" type="text"></span></div>
                                            <div class="field"><label for="auditor">审核</label><span class="box"><input id="auditor" type="text"></span></div>
                                            <div class="field"><label for="debit">借方总金额</label><span class="box"><input id="debit" type="text"></span></div>
                                        </div>
                                        <div class="column third">
                                            <div class="field"><label for="audit-state">审核状态</label><span class="combo"><select id="audit-state"><option></option></select><svg class="icon"><use href="#i-chev-down"/></svg></span></div>
                                            <div class="field"><label for="forbid-state">禁用状态</label><span class="combo"><select id="forbid-state"><option></option></select><svg class="icon"><use href="#i-chev-down"/></svg></span></div>
                                            <div class="field"><label for="maker">制单</label><span class="box"><input id="maker" type="text"></span></div>
                                            <div class="field"><label for="poster">过账</label><span class="box"><input id="poster" type="text"></span></div>
                                            <div class="field void"><label for="void-state">作废状态</label><span class="combo"><select id="void-state"><option></option></select><svg class="icon"><use href="#i-chev-down"/></svg></span></div>
                                        </div>
                                    </div>
                                    <div class="field currency"><label for="currency">本位币(辅助)</label><span class="box wide"><input id="currency" type="text"><button aria-label="选择本位币">···</button></span></div>
                                    <div class="field-row">
                                        <div class="field discard"><label for="discard">名称废弃</label><span class="combo"><select id="discard"><option></option></select><svg class="icon"><use href="#i-chev-down"/></svg></span></div>
                                        <div class="selected-field">
                                            <label for="custom">测试自定义字段</label>
                                            <input id="custom" type="text">
                                            <span class="handle left"></span>
                                            <span class="handle right"></span>
                                            <span class="handle move"></span>
                                            <svg class="smart-tag" viewBox="0 0 10 10"><path d="M.5.5h9v9h-9z" fill="#fff" stroke="#000"/><path d="M3 2l4 3-4 3" fill="none" stroke="#000"/></svg>
                                        </div>
                                    </div>
                                    <svg class="pointer to-field" viewBox="0 0 180 81"><path d="M180 0L14 77 15 81 1 79 9 68 12 73z" fill="#ff2314"/></svg>
                                </div>

                                <div class="entry">
                                    <table>
                                        <colgroup>
                                            <col class="w20"><col class="w50"><col class="w80"><col class="w80"><col class="w80"><col class="w80"><col class="w80"><col class="w45"><col class="w65"><col class="w45"><col class="w100"><col class="w45"><col class="w80"><col class="w80"><col class="w100"><col class="w100">
                                        </colgroup>
                                        <thead>
                                            <tr><th></th><th>序号</th><th>摘要</th><th>科目编码</th><th>科目名称</th><th>科目全名</th><th>核算维度</th><th>币别</th><th>汇率类型</th><th>汇率</th><th>原币金额</th><th>单位</th><th>单价</th><th>数量</th><th>借方金额</th><th>贷方金额</th></tr>
                                        </thead>
                                        <tbody>
                                            <tr><td class="mark">⁕</td><td>FEntr...</td><td>FEXPLANA...</td><td>FACCOUNTID</td><td>FACCOUNT...</td><td>FACCTFULL...</td><td>FDETAILID</td><td>FCU...</td><td>FEXCHA...</td><td>FEXC...</td><td class="num">FAMOUNTFOR</td><td>FUNI...</td><td class="num">FPRICE</td><td class="num">FQTY</td><td class="num">FDEBIT</td><td class="num">FCREDIT</td></tr>
                                        </tbody>
                                    </table>
                                </div>
                                <div class="hscroll">
                                    <svg class="icon"><use href="#i-chev-left"/></svg>
                                    <div class="track"><div class="thumb" style="width: 47%"></div></div>
                                    <svg class="icon"><use href="#i-chev-right"/></svg>
                                </div>
                            </div>
                        </div>
                    </div>
                </div>
            </div>
        </section>

        <div class="side">
            <section class="panel project">
                <div class="panel-head">
                    <h2>项目</h2>
                    <button aria-label="最大化"><svg class="icon"><use href="#i-max"/></svg></button>
                    <button aria-label="固定"><svg class="icon"><use href="#i-pin"/></svg></button>
                    <button aria-label="关闭"><svg class="icon"><use href="#i-close"/></svg></button>
                </div>
                <div class="side-tools project-tools">
                    <button aria-label="刷新"><svg class="icon"><use href="#i-refresh"/></svg></button>
                    <span class="line"></span>
                    <button aria-label="部署"><svg class="icon"><use href="#i-pkg"/></svg></button>
                    <span class="line"></span>
                    <button aria-label="上移"><svg class="icon gray"><use href="#i-up"/></svg></button>
                    <span class="line"></span>
                    <button aria-label="下移"><svg class="icon gray"><use href="#i-down"/></svg></button>
                </div>
                <div class="tree-box">
                    <ul class="tree">
                        <li class="l1 shut"><svg class="icon"><use href="#i-folder"/></svg><span>元数据包</span></li>
                        <li class="l1 shut"><svg class="icon"><use href="#i-folder"/></svg><span>员工服务</span></li>
                        <li class="l1 shut"><svg class="icon"><use href="#i-folder"/></svg><span>供应链</span></li>
                        <li class="l1 shut"><svg class="icon"><use href="#i-folder"/></svg><span>流程中心</span></li>
                        <li class="l1 shut"><svg class="icon"><use href="#i-folder"/></svg><span>BOS</span></li>
                        <li class="l1 shut"><svg class="icon"><use href="#i-folder"/></svg><span>系统管理</span></li>
                        <li class="l1 shut"><svg class="icon"><use href="#i-folder"/></svg><span>PLM</span></li>
                        <li class="l1 open"><svg class="icon"><use href="#i-folder"/></svg><span>基础管理</span></li>
                        <li class="l2"><svg class="icon"><use href="#i-app"/></svg><span>基础资料</span></li>
                        <li class="l2"><svg class="icon"><use href="#i-app"/></svg><span>基础平台</span></li>
                        <li class="l2 shut"><svg class="icon"><use href="#i-script"/></svg><span>安装脚本</span></li>
                        <li class="l2 shut"><svg class="icon"><use href="#i-script"/></svg><span>预置数据</span></li>
                        <li class="l1 shut"><svg class="icon"><use href="#i-folder"/></svg><span>生产制造</span></li>
                        <li class="l1 open"><svg class="icon"><use href="#i-folder"/></svg><span>财务会计</span></li>
                        <li class="l2 shut current"><svg class="icon"><use href="#i-app"/></svg><span>总账</span></li>
                        <li class="l2 open"><svg class="icon"><use href="#i-app"/></svg><span>出纳管理</span></li>
                        <li class="l3 open"><svg class="icon"><use href="#i-bgrid"/></svg><span>基础资料</span></li>
                        <li class="l4 open"><svg class="icon"><use href="#i-cgrid"/></svg><span>普通基础资料</span></li>
                        <li class="l5"><svg class="icon"><use href="#i-kd"/></svg><span>[KD]凭证</span></li>
                        <li class="l3"><svg class="icon"><use href="#i-bill"/></svg><span>单据</span></li>
                        <li class="l3"><svg class="icon"><use href="#i-bill"/></svg><span>日志单据</span></li>
                        <li class="l3 open"><svg class="icon"><use href="#i-dyn"/></svg><span>动态表单</span></li>
                        <li class="l4"><svg class="icon"><use href="#i-app"/></svg><span></span></li>
                    </ul>
                    <div class="vscroll">
                        <svg class="icon"><use href="#i-chev-up"/></svg>
                        <div class="track"><div class="thumb offset" style="height: 42%"></div></div>
                        <svg class="icon"><use href="#i-chev-down"/></svg>
                    </div>
                </div>
                <div class="side-tabs">
                    <button class="active">项目</button>
                    <button class="wide">扩展...</button>
                    <button>导航树</button>
                    <button>数据源</button>
                </div>
            </section>

            <section class="panel props">
                <div class="panel-head">
                    <h2>属性</h2>
                    <button aria-label="最大化"><svg class="icon"><use href="#i-max"/></svg></button>
                    <button aria-label="固定"><svg class="icon"><use href="#i-pin"/></svg></button>
                    <button aria-label="关闭"><svg class="icon"><use href="#i-close"/></svg></button>
                </div>
                <div class="side-tools">
                    <button class="on" aria-label="按分类"><svg class="icon"><use href="#i-cat"/></svg></button>
                    <button aria-label="按字母"><svg class="icon"><use href="#i-az"/></svg></button>
                    <span class="line"></span>
                    <button aria-label="属性页"><svg class="icon"><use href="#i-key"/></svg></button>
                    <span class="line"></span>
                    <button class="on" aria-label="说明"><svg class="icon"><use href="#i-qbook"/></svg></button>
                </div>
                <span class="combo object-combo"><select aria-label="对象"><option></option></select><svg class="icon"><use href="#i-chev-down"/></svg></span>
                <div class="prop-box">
                    <div class="prop-grid">
                        <div class="category">杂项<i></i></div>
                        <table>
                            <tr><th scope="row">(标识)</th><td>F_VWRI_Text</td></tr>
                            <tr class="readonly"><th scope="row">元素类型</th><td>文本</td></tr>
                            <tr><th scope="row">名称</th><td>文本</td></tr>
                            <tr><th scope="row">标题</th><td>测试自定义字段</td></tr>
                            <tr><th scope="row">字段名</th><td>F_VWRI_TEXT</td></tr>
                            <tr><th scope="row">实体</th><td>单据头</td></tr>
                            <tr><th scope="row">绑定实体属性</th><td>F_VWRI_Text</td></tr>
                            <tr><th scope="row">编辑长度</th><td>50</td></tr>
                            <tr><th scope="row">长度范围</th><td></td></tr>
                            <tr><th scope="row">缺省值</th><td></td></tr>
                            <tr><th scope="row"><label for="required">必录</label></th><td class="check"><input id="required" type="checkbox"></td></tr>
                            <tr><th scope="row"><label for="password">密码字段</label></th><td class="check"><input id="password" type="checkbox"></td></tr>
                            <tr><th scope="row"></th><td></td></tr>
                        </table>
                    </div>
                    <div class="vscroll">
                        <svg class="icon"><use href="#i-chev-up"/></svg>
                        <div class="track"><div class="thumb" style="height: 31%"></div></div>
                        <svg class="icon"><use href="#i-chev-down"/></svg>
                    </div>
                </div>
                <div class="prop-help">
                    <strong>杂项</strong>
                    <svg class="icon"><use href="#i-tip"/></svg>
                </div>
                <svg class="pointer to-prop" viewBox="0 0 170 60"><path d="M0 3L158 51.500 161 47 170 57 156 60 157 56z" fill="#ff2314"/></svg>
            </section>
        </div>
    </main>

    <div class="output"><button>输出</button></div>

    <footer class="statusbar">
        <span>当前连接的数据中心：A测试</span>
        <span>登录用户 : Administrator</span>
        <i></i>
    </footer>
    <div class="desk-strip">
        <span class="blob red"></span>
        <span class="blob pink"></span>
        <span class="pill"></span>
    </div>
</body>
</html>
```

FILE: styles.css
```css
* {
    box-sizing: border-box;
}

body {
    margin: 0;
    height: 100vh;
    display: flex;
    flex-direction: column;
    overflow: hidden;
    background: #fff;
    color: #3c3c3c;
    font: 12px/16px "Noto Sans", "Noto Sans CJK SC", sans-serif;
}

h1, h2 {
    margin: 0;
    font-size: 15px;
    font-weight: normal;
    line-height: 20px;
}

ul {
    margin: 0;
    padding: 0;
    list-style: none;
}

button, input, select {
    font: inherit;
    color: inherit;
    margin: 0;
    padding: 0;
    border: none;
    border-radius: 0;
    background: none;
    outline: none;
}

button {
    display: flex;
    align-items: center;
    justify-content: center;
    white-space: nowrap;
}

.sprite {
    display: none;
}

.icon {
    width: 16px;
    height: 16px;
    flex: none;
    display: block;
}

.tiny {
    font: bold 6px "Liberation Sans", sans-serif;
    fill: #c01818;
}

.glyph {
    font: bold 9px "Liberation Sans", sans-serif;
    fill: #fff;
}

.blue {
    color: #1e6ed0;
}

.gray {
    color: #a0a0a0;
}

/* title bar */
.titlebar {
    display: flex;
    align-items: center;
    flex: none;
    height: 24px;
    padding-left: 2px;
    gap: 5px;
    background: #fbfbfb;
    border-bottom: 1px solid #d0d0d0;
}

.window-buttons {
    display: flex;
    margin-left: auto;
    color: #222;
}

.window-buttons button {
    width: 28px;
    height: 17px;
}

.window-buttons .close {
    width: 37px;
    background: #c75050;
    color: #fff;
}

/* menu */
.menubar {
    display: flex;
    align-items: center;
    flex: none;
    height: 24px;
    padding: 0 12px;
    gap: 19px;
}

.links {
    display: flex;
    gap: 20px;
    margin-left: auto;
    padding-bottom: 1px;
}

.links a {
    display: flex;
    align-items: center;
    gap: 10px;
    font-size: 13px;
    color: #888;
    text-decoration: none;
}

/* toolbars */
.toolbar {
    display: flex;
    align-items: center;
    flex: none;
}

.main-toolbar {
    height: 30px;
    margin-bottom: 1px;
    padding-left: 5px;
}

.toolbar button {
    height: 22px;
    padding: 0 4px;
    gap: 4px;
}

.toolbar button.only {
    width: 28px;
}

.toolbar button.text {
    padding: 0 5px;
}

.toolbar button:disabled {
    color: #a0a0a0;
}

.grip {
    width: 3px;
    height: 16px;
    margin-right: 2px;
    border: 1px solid #b0b0b0;
    border-width: 0 1px;
}

.sep {
    width: 1px;
    height: 16px;
    margin: 0 1px 0 5px;
    background: #b8b8b8;
}

/* workspace */
.workspace {
    flex: 1;
    min-height: 0;
    display: flex;
    gap: 3px;
    padding: 0 2px;
}

.panel {
    display: flex;
    flex-direction: column;
    border: 1px solid #ababab;
    padding: 0 1px 1px;
    min-height: 0;
}

.panel-head {
    display: flex;
    align-items: center;
    flex: none;
    height: 36px;
    padding: 0 8px 2px 12px;
    gap: 1px;
    color: #777;
}

.panel-head h2 {
    color: #3c3c3c;
    margin-right: auto;
}

/* toolbox */
.toolbox {
    width: 206px;
    flex: none;
    margin-top: 2px;
}

.toolbox-tabs {
    display: flex;
    align-items: flex-end;
    height: 25px;
}

.toolbox-tabs button {
    width: 47px;
    height: 23px;
    border: 1px solid #ababab;
    border-left: none;
    border-bottom: none;
}

.toolbox-tabs .active {
    width: 48px;
    height: 26px;
    margin-bottom: -1px;
    border-left: 1px solid #ababab;
    background: #fff;
    z-index: 1;
}

.toolbox-tabs .wide {
    width: 55px;
}

.toolbox-body {
    flex: 1;
    min-height: 0;
    display: flex;
    flex-direction: column;
    border: 1px solid #ababab;
}

.filter {
    display: flex;
    flex: none;
    height: 19px;
    border-bottom: 1px solid #ababab;
}

.filter input {
    flex: 1;
    min-width: 0;
}

.filter input::placeholder {
    color: #999;
    opacity: 1;
}

.filter button {
    width: 17px;
    background: #f0f0f0;
    border-left: 1px solid #ababab;
    color: #666;
}

.scroll-row {
    flex: 1;
    min-height: 0;
    display: flex;
}

.toolbox-list {
    flex: 1;
    min-width: 0;
    overflow: hidden;
}

.section-head {
    display: flex;
    align-items: center;
    height: 33px;
    padding: 0 9px;
    gap: 3px;
    font-size: 15px;
    margin-bottom: 9px;
}

.section-head .chev {
    margin-left: auto;
    color: #777;
}

.toolbox-list li {
    display: flex;
    align-items: center;
    height: 24px;
    padding-left: 11px;
    gap: 9px;
    white-space: nowrap;
}

/* scroll bars */
.vscroll {
    width: 17px;
    flex: none;
    display: flex;
    flex-direction: column;
    align-items: center;
    background: #efefef;
    color: #808080;
}

.vscroll .icon, .hscroll .icon {
    margin: 0 1px;
}

.vscroll .track {
    flex: 1;
    width: 17px;
}

.thumb {
    background: #cdcdcd;
}

.vscroll .offset {
    margin-top: 14px;
}

.hscroll {
    display: flex;
    align-items: center;
    flex: none;
    height: 17px;
    background: #efefef;
    color: #808080;
}

.hscroll .track {
    flex: 1;
    display: flex;
    height: 17px;
}

/* document area */
.document {
    flex: 1;
    min-width: 0;
    display: flex;
    flex-direction: column;
}

.doc-tabs {
    display: flex;
    align-items: flex-end;
    flex: none;
    height: 25px;
    padding-left: 1px;
}

.doc-tabs button {
    height: 22px;
    padding: 0 11px;
    border: 1px solid #ababab;
    border-bottom: none;
}

.doc-tabs .active {
    height: 26px;
    margin-bottom: -2px;
    margin-left: -1px;
    background: #fff;
    z-index: 1;
}

.doc-tabs .tab-close {
    margin-left: auto;
    padding: 0 1px;
    border: none;
    color: #777;
}

.doc-frame {
    flex: 1;
    min-height: 0;
    display: flex;
    border: 1px solid #ababab;
    border-top-width: 2px;
    padding: 1px 2px 2px;
}

.doc-inner {
    flex: 1;
    min-width: 0;
    border: 1px solid #d4d4d4;
    display: flex;
    flex-direction: column;
}

.view-bar {
    display: flex;
    align-items: center;
    flex: none;
    height: 31px;
    padding-left: 32px;
    border-bottom: 2px solid #d4d4d4;
}

.view-bar label {
    margin-right: 8px;
}

.view-bar .combo {
    margin-right: 37px;
}

.view-buttons {
    display: flex;
    gap: 10px;
    margin-left: -7px;
}

.view-buttons button {
    width: 55px;
    height: 23px;
    border: 1px solid #ababab;
    background: #efefef;
    color: #222;
}

.view-buttons button:last-child {
    width: 70px;
}

.view-buttons button:disabled {
    color: #a0a0a0;
}

.combo {
    position: relative;
    display: block;
    width: 131px;
    height: 20px;
}

.combo select {
    appearance: none;
    display: block;
    width: 100%;
    height: 100%;
    padding: 0 20px 0 2px;
    border: 1px solid #a0a0a0;
    background: #fff;
}

/* drop arrow lies over the select */
.combo .icon {
    position: absolute;
    top: 1px;
    right: 1px;
    width: 17px;
    height: calc(100% - 2px);
    background: #ececec;
    border-left: 1px solid #a0a0a0;
    color: #777;
    pointer-events: none;
}

.designer {
    flex: 1;
    min-height: 0;
    padding: 9px;
    overflow: hidden;
}

/* voucher form window */
.form-window {
    width: 1100px;
    height: 692px;
    display: flex;
    flex-direction: column;
    padding: 0 6px 7px;
    border: 1px solid #0072c6;
    background: #fbfbfb;
}

.form-title {
    display: flex;
    align-items: center;
    flex: none;
    height: 30px;
    padding: 0 0 1px 4px;
    gap: 4px;
}

.form-body {
    flex: 1;
    min-height: 0;
    display: flex;
    flex-direction: column;
    border: 1px solid #d0d0d0;
    background: #fff;
}

.form-toolbar {
    height: 31px;
    padding-left: 6px;
}

/* designer surface */
.canvas {
    position: relative;
    width: 845px;
    height: 291px;
    flex: none;
    margin: 2px 0 0 4px;
    padding-top: 15px;
    border: 1px dotted #000;
    border-bottom: none;
}

.field-columns {
    display: flex;
    height: 174px;
    margin-bottom: 7px;
}

.column {
    display: flex;
    flex-direction: column;
    gap: 5px;
}

.first {
    width: 212px;
    padding-top: 2px;
}

.second {
    width: 240px;
}

.third {
    width: 251px;
    padding-top: 3px;
}

.field {
    display: flex;
    justify-content: flex-end;
    gap: 9px;
}

.field label {
    height: 20px;
    padding-top: 4px;
    white-space: nowrap;
}

.low {
    margin-top: 2px;
}

.void {
    margin-top: 9px;
    padding-right: 26px;
}

.currency {
    width: 665px;
}

.field-row {
    display: flex;
    align-items: flex-start;
    margin-top: 10px;
}

.discard {
    width: 320px;
}

.box {
    display: flex;
    width: 131px;
    height: 20px;
    border: 1px solid #a0a0a0;
    background: #fff;
}

.box.wide {
    width: 171px;
}

.box input {
    flex: 1;
    min-width: 0;
    padding-left: 2px;
}

.box button {
    width: 18px;
    border-left: 1px solid #a0a0a0;
    background: #ececec;
    color: #777;
    font-weight: bold;
}

.selected-field {
    position: relative;
    display: flex;
    width: 301px;
    height: 21px;
    margin: 10px 0 0 48px;
    border: 1px solid #808080;
}

.selected-field label {
    width: 98px;
    padding: 3px 0 0 5px;
}

.selected-field input {
    width: 172px;
    border: 1px solid #808080;
    border-top: none;
}

/* selection handles */
.handle {
    position: absolute;
    width: 6px;
    height: 6px;
    border: 1px solid #000;
    background: #fff;
}

.handle.left {
    left: -7px;
    top: 7px;
}

.handle.right {
    right: -7px;
    top: 7px;
}

.handle.move {
    left: 97px;
    top: -6px;
    background: #ffea00;
}

.smart-tag {
    position: absolute;
    right: 6px;
    top: -8px;
    width: 10px;
    height: 10px;
}

/* entry grid */
.entry {
    flex: 1;
    min-height: 0;
    overflow: hidden;
    border-left: 1px solid #ababab;
}

.entry table {
    width: 1130px;
    table-layout: fixed;
    border-collapse: collapse;
}

.w20 { width: 20px; }
.w45 { width: 45px; }
.w50 { width: 50px; }
.w65 { width: 65px; }
.w80 { width: 80px; }
.w100 { width: 100px; }

.entry th, .entry td {
    height: 21px;
    padding: 0 0 0 3px;
    overflow: hidden;
    white-space: nowrap;
    text-align: left;
    font-weight: normal;
    border-right: 1px solid #d0d0d0;
    border-bottom: 1px solid #d0d0d0;
}

.entry th {
    color: #111;
    border: 1px solid #ababab;
    border-left: none;
}

.entry .num {
    text-align: right;
    padding-right: 2px;
}

.entry .mark {
    text-align: center;
}

/* right side */
.side {
    width: 241px;
    flex: none;
    display: flex;
    flex-direction: column;
    gap: 4px;
    margin-top: 2px;
}

.project {
    flex: 498 1 0;
}

.props {
    position: relative;
    flex: 385 1 0;
}

.side-tools {
    display: flex;
    align-items: center;
    flex: none;
    height: 31px;
    padding: 0 0 1px 2px;
}

.project-tools {
    padding-left: 4px;
}

.side-tools button {
    width: 24px;
    height: 22px;
}

.side-tools .line {
    width: 1px;
    height: 16px;
    margin: 0 3px;
    background: #c0c0c0;
}

.side-tools .on {
    background: #b1d6f0;
}

.tree-box {
    flex: 1;
    min-height: 0;
    display: flex;
    border: 1px solid #ababab;
}

.tree {
    flex: 1;
    min-width: 0;
    overflow: hidden;
    padding-top: 1px;
}

.tree li {
    display: flex;
    align-items: center;
    height: 18px;
    padding-left: 23px;
    white-space: nowrap;
}

.tree li::before {
    content: "";
    width: 0;
    height: 0;
    margin: 0 6px 0 3px;
    border: 4px solid transparent;
    border-width: 4px 0 4px 4px;
}

.tree .shut::before {
    border-left-color: #777;
}

.tree .open::before {
    border-width: 6px 0 0 6px;
    margin: 0 5px 0 2px;
    border-color: transparent;
    border-bottom: 6px solid #777;
    border-top: none;
}

.tree .l2 { padding-left: 41px; }
.tree .l3 { padding-left: 59px; }
.tree .l4 { padding-left: 77px; }
.tree .l5 { padding-left: 95px; }

.tree span {
    flex: 1;
    height: 18px;
    margin-left: 1px;
    padding: 1px 0 0 3px;
    border-left: 1px solid #d0d0d0;
}

.tree .current span {
    background: #eaeaea;
}

.side-tabs {
    display: flex;
    flex: none;
    height: 29px;
    padding: 3px 4px 0 0;
}

.side-tabs button {
    flex: 59 1 0;
    border-right: 1px solid #d0d0d0;
}

.side-tabs .active {
    flex: 49 1 0;
    color: #0072c6;
}

.side-tabs .wide {
    flex: 54 1 0;
    justify-content: flex-start;
    padding-left: 11px;
}

.object-combo {
    width: auto;
    flex: none;
    margin-bottom: 2px;
}

/* property grid */
.prop-box {
    flex: 1;
    min-height: 0;
    display: flex;
    border: 1px solid #ababab;
    border-left-width: 2px;
}

.prop-grid {
    flex: 1;
    min-width: 0;
    overflow: hidden;
    padding-left: 15px;
}

.category {
    display: flex;
    align-items: center;
    justify-content: space-between;
    height: 17px;
    padding: 0 6px 0 4px;
    color: #0072c6;
}

.category i {
    border: 3px solid transparent;
    border-top: none;
    border-bottom: 4px solid #777;
}

.prop-grid table {
    width: 100%;
    table-layout: fixed;
    border-collapse: collapse;
    border-top: 1px solid #ababab;
    border-left: 1px solid #ababab;
}

.prop-grid th, .prop-grid td {
    height: 18px;
    padding: 0 0 0 3px;
    overflow: hidden;
    white-space: nowrap;
    text-align: left;
    border-bottom: 1px solid #d0d0d0;
    border-right: 1px solid #d0d0d0;
}

.prop-grid th {
    width: 93px;
    padding-left: 18px;
    font-size: 13px;
}

.prop-grid .readonly {
    color: #999;
}

.prop-grid .check {
    padding: 0;
}

.check input {
    appearance: none;
    display: block;
    width: 13px;
    height: 13px;
    margin: 0 auto;
    border: 1px solid #ababab;
}

.prop-help {
    flex: none;
    height: 51px;
    margin-top: 2px;
    padding: 2px 4px;
    border: 1px solid #ababab;
    background: #ffffe1;
}

.prop-help strong {
    font-size: 13px;
    line-height: 18px;
}

.prop-help .icon {
    margin: 6px 0 0 2px;
}

/* red pointers drawn over the window */
.pointer {
    position: absolute;
    pointer-events: none;
}

.to-field {
    left: 681px;
    top: 156px;
    width: 180px;
    height: 81px;
}

.to-prop {
    left: -63px;
    top: 47px;
    width: 170px;
    height: 60px;
}

/* bottom */
.output {
    display: flex;
    align-items: flex-end;
    flex: none;
    height: 38px;
    padding-left: 5px;
}

.output button {
    width: 31px;
    height: 26px;
    padding-bottom: 2px;
    border-bottom: 4px solid #ababab;
}

.statusbar {
    display: flex;
    align-items: center;
    flex: none;
    height: 26px;
    padding: 0 5px 0 9px;
    gap: 8px;
    background: #0072c6;
    color: #fff;
}

.statusbar i {
    width: 1px;
    height: 20px;
    margin-left: auto;
    background: #cfe4f5;
}

.desk-strip {
    position: relative;
    flex: none;
    height: 8px;
    overflow: hidden;
    border-top: 1px solid #bbb;
    background: #efefef;
}

.blob {
    position: absolute;
    border-radius: 6px;
}

.blob.red {
    left: 32px;
    top: 5px;
    width: 12px;
    height: 12px;
    background: #b83228;
}

.blob.pink {
    left: 55%;
    top: 3px;
    width: 38px;
    height: 12px;
    background: #e8b0ae;
}

.pill {
    position: absolute;
    left: 69%;
    top: 4px;
    width: 36px;
    height: 12px;
    background: #fafafa;
    border-radius: 6px;
}
```
